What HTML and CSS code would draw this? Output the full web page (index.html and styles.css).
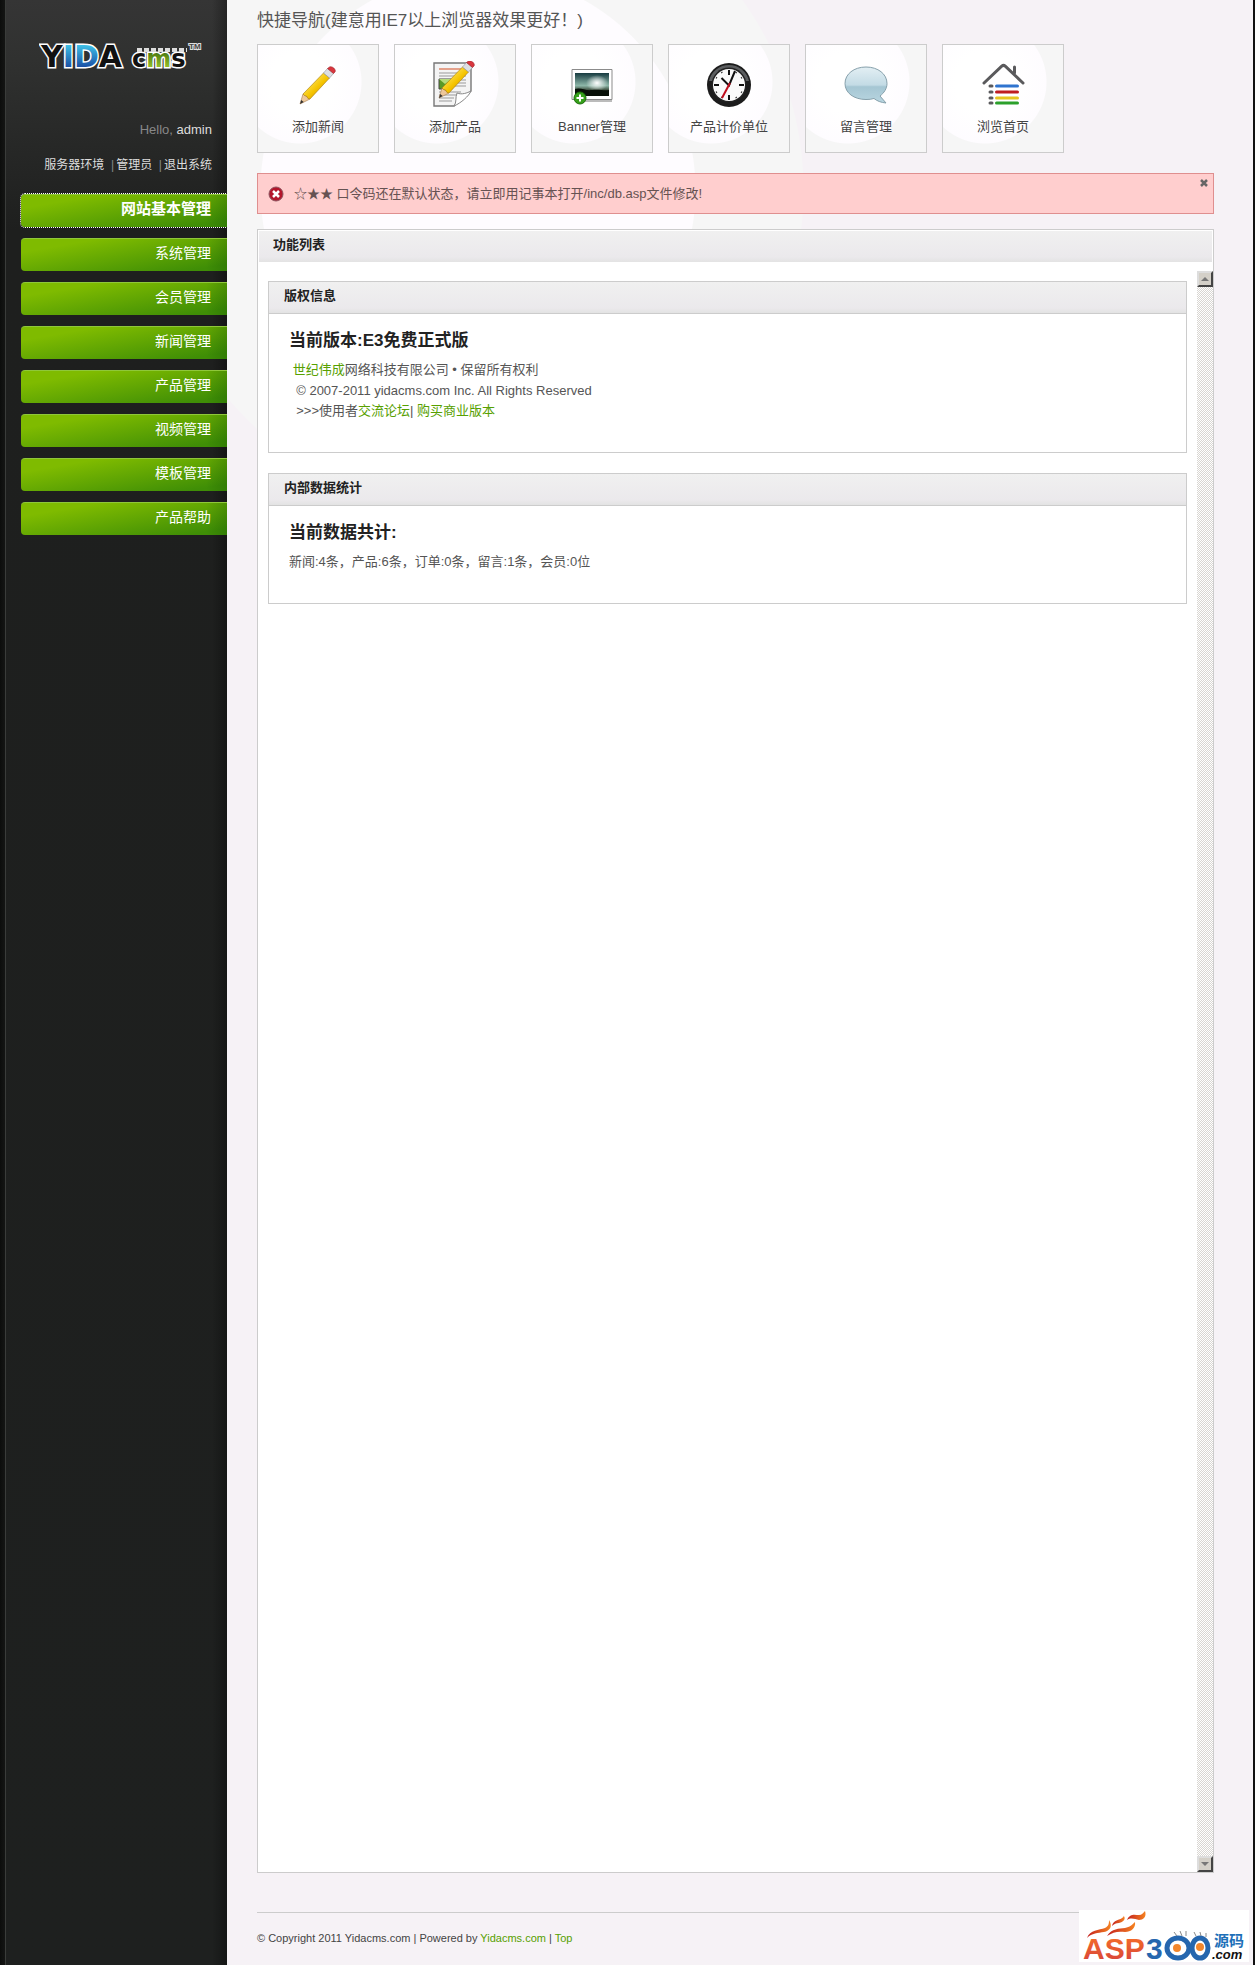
FILE: index.html
```html
<!DOCTYPE html>
<html lang="zh-CN">
<head>
  <meta charset="UTF-8" />
  <meta name="viewport" content="width=device-width, initial-scale=1.0"/>
  <title>YIDAcms</title>
  <link rel="stylesheet" href="styles.css">
</head>
<body>
  <div class="wrapper" id="top">

    <aside class="sidebar">
      <a class="logo" href="#">
        <svg width="164" height="34" viewBox="0 0 164 34" role="img" aria-label="YIDA cms">
          <defs>
            <linearGradient id="blue" x1="0" y1="0" x2="0" y2="1">
              <stop offset="0.15" stop-color="#3fc4e8"/><stop offset="0.9" stop-color="#153f9c"/>
            </linearGradient>
            <linearGradient id="lime" x1="0" y1="0" x2="0" y2="1">
              <stop offset="0.3" stop-color="#4f7d12"/><stop offset="0.9" stop-color="#a5d02c"/>
            </linearGradient>
          </defs>
          <g class="logo-text">
            <text x="2" y="27" font-size="30" fill="#111">Y<tspan fill="url(#blue)">ID</tspan>A</text>
            <text x="93" y="27" font-size="24" fill="#111">c<tspan fill="url(#lime)">m</tspan>s</text>
          </g>
          <path d="M98 10h50" stroke="#ddd" stroke-width="4" stroke-dasharray="5 2"/>
          <text x="150" y="9" class="logo-tm">TM</text>
        </svg>
      </a>

      <div class="profile">
        <p>Hello, <a href="#">admin</a></p>
        <p class="profile-links"><a href="#">服务器环境</a> &nbsp;|<a href="#">管理员</a> &nbsp;|<a href="#">退出系统</a></p>
      </div>

      <nav>
        <ul class="menu">
          <li><a class="current" href="#">网站基本管理</a></li>
          <li><a href="#">系统管理</a></li>
          <li><a href="#">会员管理</a></li>
          <li><a href="#">新闻管理</a></li>
          <li><a href="#">产品管理</a></li>
          <li><a href="#">视频管理</a></li>
          <li><a href="#">模板管理</a></li>
          <li><a href="#">产品帮助</a></li>
        </ul>
      </nav>
    </aside>

    <main class="main">
      <p class="intro">快捷导航(建意用IE7以上浏览器效果更好！)</p>

      <ul class="shortcuts">
        <li><a href="#">
          <svg width="48" height="48" viewBox="0 0 48 48">
            <defs>
              <linearGradient id="wood" x1="0" y1="0" x2="1" y2="1">
                <stop offset="0.2" stop-color="#ffe766"/><stop offset="0.55" stop-color="#f5c400"/><stop offset="0.9" stop-color="#c98a06"/>
              </linearGradient>
              <g id="pencil">
                <path d="M6 43l3-10 7 5z" fill="#edc79b" stroke="#a87a48" stroke-width="0.6"/>
                <path d="M6 43l1.200-4 2.500 2z" fill="#333"/>
                <path d="M9 33L29.500 12l6 5L16 38l-2-.5-1.500-2.500-2-.5z" fill="url(#wood)" stroke="#a77c0c" stroke-width="0.6"/>
                <path d="M29.500 12l4-4.500 6 5-4 4.500z" fill="#dcdfe3" stroke="#8f949b" stroke-width="0.6"/>
                <path d="M33.500 7.500L35.500 6c2.500-1.300 7 2.500 5.500 5l-1.500 1.500z" fill="#d9363e" stroke="#9d2027" stroke-width="0.6"/>
              </g>
            </defs>
            <use href="#pencil"/>
          </svg>
          <span>添加新闻</span>
        </a></li>
        <li><a href="#">
          <svg width="48" height="48" viewBox="0 0 48 48">
            <path d="M3 2h37v28L23 45H3z" fill="#f4f4f4" stroke="#777" stroke-width="1.4"/>
            <path d="M8 8h26" stroke="#e3a18c" stroke-width="2"/>
            <path d="M8 12h27M8 15h27M20 19h15M20 22h15M20 25h15M8 31h22M8 34h17M8 37h15M8 40h13" stroke="#999"/>
            <path d="M8 18h13v10H8z" fill="#5a9a26" stroke="#444"/>
            <path d="M8 18h13l-7 5z" fill="#b5dc7b"/>
            <path d="M23 45c3-4 1-8 3-13 5 2 10 0 14-2-2 5-10 12-17 15z" fill="#fff" stroke="#888"/>
            <use href="#pencil" x="2" y="-6"/>
          </svg>
          <span>添加产品</span>
        </a></li>
        <li><a href="#">
          <svg width="48" height="48" viewBox="0 0 48 48">
            <defs>
              <linearGradient id="sky" x1="0" y1="0" x2="0" y2="1">
                <stop offset="0" stop-color="#173b40"/><stop offset="0.55" stop-color="#8db7a8"/><stop offset="0.75" stop-color="#3a4a3a"/><stop offset="1" stop-color="#040804"/>
              </linearGradient>
              <radialGradient id="sun"><stop offset="0" stop-color="#fff"/><stop offset="1" stop-color="#fff" stop-opacity="0"/></radialGradient>
            </defs>
            <path d="M7 39h37v2H7z" fill="#bbb"/>
            <path d="M4 8.500h40v30H4z" fill="#fff" stroke="#8b8b8b"/>
            <path d="M7 12h34v23H7z" fill="url(#sky)"/>
            <ellipse cx="29" cy="22" rx="11" ry="8" fill="url(#sun)"/>
            <path d="M7 28c6-2 10 2 17 1s12 1 17 0v6H7z" fill="#081008"/>
            <circle cx="12" cy="37" r="6" fill="#36a01a" stroke="#1c6e0c"/>
            <path d="M12 33.500v7M8.500 37h7" stroke="#fff" stroke-width="2"/>
          </svg>
          <span>Banner管理</span>
        </a></li>
        <li><a href="#">
          <svg width="48" height="48" viewBox="0 0 48 48">
            <circle cx="24" cy="24" r="22" fill="#1c1c1c"/>
            <path d="M4 20a20.500 20.500 0 0 1 40 0z" fill="#5b5d5f"/>
            <circle cx="24" cy="24" r="17.5" fill="#222"/>
            <circle cx="24" cy="24" r="16" fill="#fafafa"/>
            <path d="M24 9v5M24 34v5M9 24h5M34 24h5" stroke="#111" stroke-width="2"/>
            <path d="M31.500 11l-.6 1M37 16.500l-1 .6M37 31.500l-1-.6M31.500 37l-.6-1M16.500 37l.6-1M11 31.500l1-.6M11 16.500l1 .6M16.500 11l.6 1" stroke="#333" stroke-width="1.5"/>
            <path d="M16.500 17L24 24.500 30 10" fill="none" stroke="#111" stroke-width="2"/>
            <path d="M25 22l-8 15" stroke="#c00d1c" stroke-width="2"/>
          </svg>
          <span>产品计价单位</span>
        </a></li>
        <li><a href="#">
          <svg width="48" height="48" viewBox="0 0 48 48">
            <defs>
              <linearGradient id="bubble" x1="0" y1="0" x2="0" y2="1">
                <stop offset="0" stop-color="#e3eff4"/><stop offset="0.5" stop-color="#c3dbe5"/><stop offset="0.55" stop-color="#a5c6d3"/><stop offset="1" stop-color="#b9d6e1"/>
              </linearGradient>
            </defs>
            <path d="M24 6c12 0 21 7 21 16.500 0 5-3 9.500-7 12.500l6 7c-5-.5-9-2-12-4.500-2.500.8-5 1-8 1C12 38.500 3 32 3 22.500S12 6 24 6z" fill="url(#bubble)" stroke="#86a0ab"/>
          </svg>
          <span>留言管理</span>
        </a></li>
        <li><a href="#">
          <svg width="48" height="48" viewBox="0 0 48 48">
            <g fill="none" stroke-linecap="round" stroke-width="3">
              <path d="M5 22L23 5q1.500-1.200 3 0l18 17M35.500 12V6" stroke="#5a5a5c"/>
              <path d="M11 25h2M11 31h2M11 37h2M11 42h2" stroke="#5a5a5c"/>
              <path d="M17.500 25h21" stroke="#2f74cf"/>
              <path d="M17.500 31h21" stroke="#bf1d20"/>
              <path d="M17.500 37h21" stroke="#e6c520"/>
              <path d="M17.500 42h21" stroke="#2ba02b"/>
            </g>
          </svg>
          <span>浏览首页</span>
        </a></li>
      </ul>

      <div class="alert">
        <svg width="16" height="16" viewBox="0 0 16 16">
          <circle cx="8" cy="8" r="7" fill="#b3152b" stroke="#8d5560"/>
          <path d="M5 5l6 6M11 5l-6 6" stroke="#fff" stroke-width="2.5"/>
        </svg>
        <p>☆★★ 口令码还在默认状态，请立即用记事本打开/inc/db.asp文件修改!</p>
        <button type="button" class="close" aria-label="关闭">
          <svg width="8" height="8" viewBox="0 0 8 8"><path d="M1 1l6 6M7 1L1 7" stroke="#666" stroke-width="2.5"/></svg>
        </button>
      </div>

      <section class="panel">
        <h3 class="panel-header">功能列表</h3>
        <div class="frame">
          <div class="frame-content">
            <section class="box">
              <h3 class="box-header">版权信息</h3>
              <div class="box-content">
                <h4>当前版本:E3免费正式版</h4>
                <p>&nbsp;<a href="#">世纪伟成</a>网络科技有限公司 • 保留所有权利</p>
                <p>&nbsp; © 2007-2011 yidacms.com Inc. All Rights Reserved<br>
                &nbsp; &gt;&gt;&gt;使用者<a href="#">交流论坛</a>| <a href="#">购买商业版本</a></p>
              </div>
            </section>
            <section class="box">
              <h3 class="box-header">内部数据统计</h3>
              <div class="box-content">
                <h4>当前数据共计:</h4>
                <p>新闻:4条，产品:6条，订单:0条，留言:1条，会员:0位</p>
              </div>
            </section>
          </div>
          <div class="scrollbar">
            <button type="button" aria-label="向上"><svg width="8" height="4" viewBox="0 0 8 4"><path d="M0 4l4-4 4 4z" fill="#777"/></svg></button>
            <button type="button" aria-label="向下"><svg width="8" height="4" viewBox="0 0 8 4"><path d="M0 0l4 4 4-4z" fill="#777"/></svg></button>
          </div>
        </div>
      </section>

      <footer class="footer">
        © Copyright 2011 Yidacms.com | Powered by <a href="#">Yidacms.com</a> | <a href="#top">Top</a>
      </footer>
    </main>

    <div class="watermark">
      <svg width="170" height="52" viewBox="0 0 170 52" role="img" aria-label="ASP300源码.com">
        <defs>
          <linearGradient id="fire" x1="0" y1="0" x2="1" y2="0">
            <stop offset="0" stop-color="#c3201f"/><stop offset="1" stop-color="#f58220"/>
          </linearGradient>
          <linearGradient id="asp" x1="0" y1="0" x2="0" y2="1">
            <stop offset="0.2" stop-color="#f26a2a"/><stop offset="0.9" stop-color="#d8443a"/>
          </linearGradient>
        </defs>
        <g fill="url(#fire)">
          <path d="M8 28c3-8 12-8 18-10 4-2 4-5 4-8 4 6 1 11-5 12-6 1-12 1-17 6z"/>
          <path d="M33 16c1-6 8-6 10-8 2-1 2-2 1-3 4 4 0 7-4 8-3 0-5 1-7 3z"/>
          <path d="M48 10c3-7 8-5 12-5 3 0 4-2 6-4 2 6-2 9-6 9-4-1-8-3-12 0z"/>
          <path d="M28 26c5-8 12-7 18-8 5-1 7-3 10-6 1 6-4 10-10 10-7-1-12 0-18 4z"/>
        </g>
        <text x="4" y="49" class="wm-big" fill="url(#asp)">ASP</text>
        <text x="67" y="49" class="wm-big" fill="#2566ae">3</text>
        <g fill="#fff" stroke="#2566ae" stroke-width="5">
          <ellipse cx="99" cy="38" rx="11" ry="10"/><ellipse cx="121" cy="38" rx="8" ry="10"/>
        </g>
        <g fill="#f2862c"><circle cx="98" cy="38" r="4"/><circle cx="121" cy="37" r="4"/></g>
        <path d="M95 22l3 4M101 21l2 5M107 21v5M115 22l2 4M121 22l1 4M127 23v4" stroke="#888"/>
        <text x="135" y="36" class="wm-cn">源码</text>
        <text x="133" y="49" class="wm-com">.com</text>
      </svg>
    </div>
  </div>
</body>
</html>
```

FILE: styles.css
```css
* { margin: 0; padding: 0; box-sizing: border-box; }
body { font-family: "Liberation Sans", Arial, "Noto Sans CJK SC", sans-serif; font-size: 13px; line-height: 20px; color: #555; background-color: #f6f2f6; }
a { color: #57a000; text-decoration: none; }
ul { list-style: none; }
button { cursor: pointer; }

.wrapper { display: flex; position: relative; min-height: 100vh; border-right: 2px solid #111; }

/* Sidebar */
.sidebar { width: 227px; flex-shrink: 0; background: linear-gradient(to right, #0c0d0c, #141514 5px, #3a3c3a 5px, #3a3c3a 6px, transparent 6px, transparent 212px, rgba(0,0,0,0.3)), linear-gradient(#353535, #303130 60px, #1e1f1e 230px, #1e201f); }
.logo { display: block; margin: 40px 0 0 39px; height: 34px; }
.logo-text { font-family: "DejaVu Sans", sans-serif; font-weight: bold; stroke: #fff; stroke-width: 3px; paint-order: stroke; }
.logo-tm { font-size: 8px; font-weight: bold; fill: #444; stroke: #ddd; stroke-width: 2px; paint-order: stroke; }
.profile { margin-top: 46px; padding-right: 15px; text-align: right; color: #888; }
.profile a { color: #ddd; }
.profile-links { margin-top: 15px; font-size: 12px; }
.profile-links a + a { margin-left: 2px; }
.menu { margin-top: 19px; padding-left: 21px; display: flex; flex-direction: column; gap: 11px; }
.menu a { display: block; height: 33px; line-height: 28px; padding-right: 16px; text-align: right; font-size: 14px; color: #fff; border-top: 1px solid #8fc73a; border-radius: 4px 0 0 4px; background: linear-gradient(to right, transparent 185px, rgba(0,60,0,0.2)), linear-gradient(170deg, #7fbb00 20%, #3f8e06 90%); }
.menu .current { font-size: 15px; font-weight: bold; outline: 1px dotted #fff; }

/* Main column */
.main { flex: 1; min-width: 0; display: flex; flex-direction: column; padding: 6px 39px 17px 30px; background: radial-gradient(circle at 251px 190px, #fefcff 217px, #f6f6f6 218px, #f6f6f6 325px, #f6f2f6 326px); }
.intro { font-size: 17px; line-height: 30px; }
.shortcuts { display: flex; flex-wrap: wrap; gap: 15px; margin-top: 8px; }
.shortcuts a { display: flex; flex-direction: column; align-items: center; gap: 8px; width: 122px; height: 109px; padding-top: 16px; border: 1px solid #ccc; color: #444; background: radial-gradient(circle at 42px 37px, #fff 30px, #fefcff 61px, #f6f6f6 62px); }

.alert { display: flex; align-items: center; position: relative; margin-top: 20px; height: 41px; padding-left: 10px; gap: 10px; border: 1px solid #df8f8f; background-color: #ffcece; color: #665252; }
.close { position: absolute; top: 4px; right: 4px; display: flex; padding: 1px; border: none; background: none; }

.panel { flex: 1; display: flex; flex-direction: column; margin-top: 15px; border: 1px solid #ccc; background-color: #fff; }
.panel-header, .box-header { height: 32px; padding-left: 15px; font-size: 13px; line-height: 27px; color: #222; background: linear-gradient(#f0f0f0, #ebe9ec 26px, #e3e3e3); }
.panel-header { padding-left: 14px; border: 1px solid #fff; border-bottom: none; }
.frame { flex: 1; display: flex; margin-top: 9px; }
.frame-content { flex: 1; padding: 10px; }
.box { margin-bottom: 20px; border: 1px solid #ccc; padding-bottom: 30px; }
.box-header { border-bottom: 1px solid #ccc; }
.box-content { padding: 17px 20px 0; }
.box-content h4 { font-size: 17px; line-height: 20px; color: #222; margin-bottom: 9px; }
.box-content p { margin-bottom: 1px; }

.scrollbar { display: flex; flex-direction: column; justify-content: space-between; width: 16px; background: repeating-conic-gradient(#d9d6d2 0 25%, #fff 0 50%) 0 0 / 2px 2px; }
.scrollbar button { display: flex; align-items: center; justify-content: center; width: 16px; height: 16px; border: 2px solid; border-color: #ddd #444 #444 #ddd; background-color: #d4d0c8; }

.footer { margin-top: 39px; padding-top: 15px; border-top: 1px solid #ccc; font-size: 11px; line-height: 20px; color: #444; }

.watermark { position: absolute; right: 4px; bottom: 3px; height: 52px; background-color: #fff; }
.wm-big { font-size: 30px; font-weight: bold; }
.wm-cn { font-family: "Noto Sans CJK SC", sans-serif; font-size: 15px; font-weight: bold; fill: #1d6fb8; }
.wm-com { font-size: 13px; font-weight: bold; font-style: italic; fill: #111; }
```
